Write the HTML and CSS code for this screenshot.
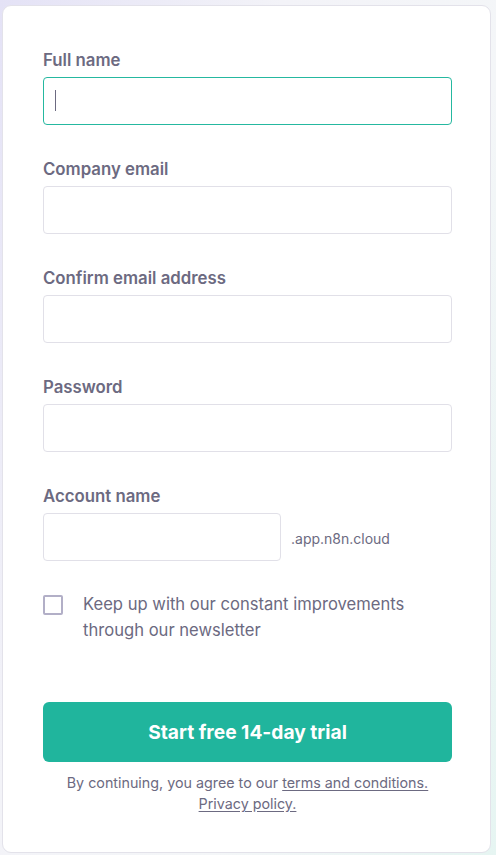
FILE: index.html
```html
<!DOCTYPE html>
<html lang="en">
<head>
<meta charset="utf-8">
<title>Sign up</title>
<link rel="stylesheet" href="styles.css">
</head>
<body>
<div class="card">
  <form class="form">
    <div class="field">
      <label class="label">Full name</label>
      <div class="input-wrap">
        <input class="input input-focus" type="text">
        <span class="caret"></span>
      </div>
    </div>
    <div class="field">
      <label class="label">Company email</label>
      <input class="input" type="email">
    </div>
    <div class="field">
      <label class="label">Confirm email address</label>
      <input class="input" type="email">
    </div>
    <div class="field">
      <label class="label">Password</label>
      <input class="input" type="password">
    </div>
    <div class="field">
      <label class="label">Account name</label>
      <div class="account-row">
        <input class="input input-account" type="text">
        <span class="suffix">.app.n8n.cloud</span>
      </div>
    </div>
    <div class="check-row">
      <span class="checkbox"></span>
      <span class="check-text">Keep up with our constant improvements through our newsletter</span>
    </div>
    <button class="submit" type="button">Start free 14-day trial</button>
    <p class="legal">By continuing, you agree to our <a href="#" class="link">terms and conditions.</a><br><a href="#" class="link">Privacy policy.</a></p>
  </form>
</div>
</body>
</html>
```
FILE: styles.css
```css
html, body {
  margin: 0;
  padding: 0;
}
body {
  width: 496px;
  height: 855px;
  overflow: hidden;
  background: linear-gradient(110deg, #e4e2f6 0%, #f3f3f8 35%, #f4f6f8 65%, #e6f5f2 100%);
  font-family: Inter, "Liberation Sans", sans-serif;
  color: #6c6a81;
}
.card {
  box-sizing: border-box;
  margin: 5px 0 0 2px;
  width: 489px;
  height: 848px;
  background: #ffffff;
  border: 1px solid #e3e2ea;
  border-radius: 9px;
  padding: 44px 38px 0 40px;
}
.form {
  display: flex;
  flex-direction: column;
}
.field {
  display: flex;
  flex-direction: column;
  margin-bottom: 34px;
}
.label {
  font-size: 16.8px;
  font-weight: 600;
  line-height: 20px;
  margin-bottom: 7px;
  color: #6c6a81;
}
.input-wrap {
  position: relative;
}
.input {
  box-sizing: border-box;
  width: 409px;
  height: 48px;
  border: 1px solid #e1e0e8;
  border-radius: 4px;
  background: #fff;
  outline: none;
  font: inherit;
  padding: 0 12px;
}
.input-focus {
  border: 1.5px solid #25b8a0;
}
.caret {
  position: absolute;
  left: 12px;
  top: 13px;
  width: 1px;
  height: 21px;
  background: #6c6a81;
}
.account-row {
  display: flex;
  align-items: center;
  gap: 10px;
}
.input-account {
  width: 238px;
}
.suffix {
  font-size: 14px;
  color: #6c6a81;
  padding-top: 3px;
}
.check-row {
  display: flex;
  align-items: flex-start;
  gap: 20px;
  margin-top: 0;
}
.checkbox {
  box-sizing: border-box;
  flex: none;
  width: 20px;
  height: 20px;
  border: 2px solid #b2afc7;
  border-radius: 2px;
  margin-top: 0;
}
.check-text {
  font-size: 16.6px;
  line-height: 26px;
  margin-top: -4px;
  color: #6c6a81;
  width: 345px;
}
.submit {
  margin-top: 59px;
  width: 409px;
  height: 60px;
  border: none;
  border-radius: 6px;
  background: #20b59d;
  color: #ffffff;
  font-family: inherit;
  font-size: 19.2px;
  font-weight: 700;
  cursor: pointer;
}
.legal {
  margin: 10px 0 0 0;
  text-align: center;
  font-size: 14.3px;
  line-height: 21px;
  color: #6c6a81;
}
.link {
  color: #6c6a81;
  text-decoration: underline;
  text-underline-offset: 2px;
}
```
